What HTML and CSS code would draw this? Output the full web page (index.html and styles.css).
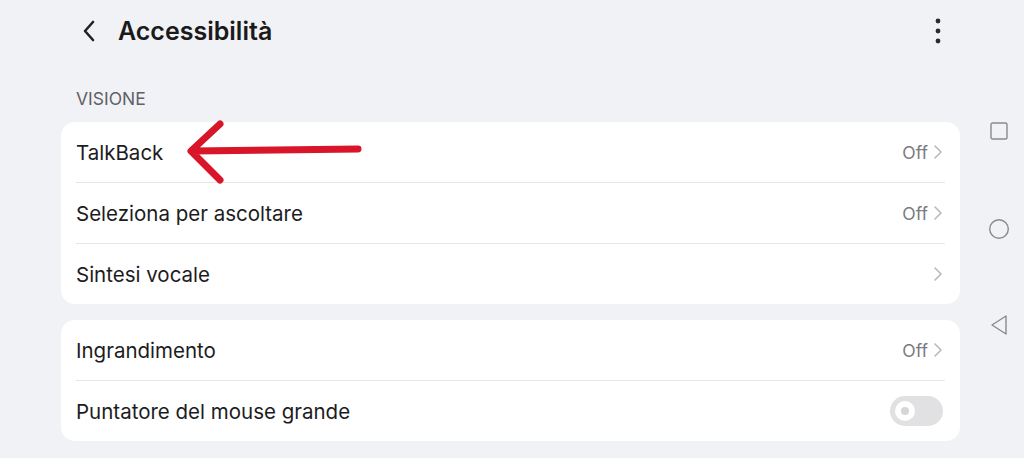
FILE: index.html
```html
<!DOCTYPE html>
<html lang="it">
<head>
  <meta charset="utf-8">
  <title>Accessibilità</title>
  <link rel="stylesheet" href="styles.css">
</head>
<body>
  <div class="screen">
    <main class="main">
      <header class="topbar">
        <svg class="back" width="16" height="22" viewBox="0 0 16 22"><path d="M12 2 L4 11 L12 20" fill="none" stroke="#222" stroke-width="2.6" stroke-linecap="round" stroke-linejoin="round"/></svg>
        <h1 class="title">Accessibilità</h1>
        <svg class="more" width="8" height="28" viewBox="0 0 8 28"><circle cx="4" cy="4" r="2.4" fill="#2b2b2b"/><circle cx="4" cy="14" r="2.4" fill="#2b2b2b"/><circle cx="4" cy="24" r="2.4" fill="#2b2b2b"/></svg>
      </header>

      <div class="section-label">VISIONE</div>

      <section class="card">
        <div class="row">
          <span class="label">TalkBack</span>
          <span class="value">Off</span>
          <svg class="chev" width="10" height="16" viewBox="0 0 10 16"><path d="M2 2 L8 8 L2 14" fill="none" stroke="#b9b9bd" stroke-width="1.6" stroke-linecap="round" stroke-linejoin="round"/></svg>
        </div>
        <div class="row">
          <span class="label">Seleziona per ascoltare</span>
          <span class="value">Off</span>
          <svg class="chev" width="10" height="16" viewBox="0 0 10 16"><path d="M2 2 L8 8 L2 14" fill="none" stroke="#b9b9bd" stroke-width="1.6" stroke-linecap="round" stroke-linejoin="round"/></svg>
        </div>
        <div class="row">
          <span class="label">Sintesi vocale</span>
          <svg class="chev" width="10" height="16" viewBox="0 0 10 16"><path d="M2 2 L8 8 L2 14" fill="none" stroke="#b9b9bd" stroke-width="1.6" stroke-linecap="round" stroke-linejoin="round"/></svg>
        </div>
      </section>

      <section class="card">
        <div class="row">
          <span class="label">Ingrandimento</span>
          <span class="value">Off</span>
          <svg class="chev" width="10" height="16" viewBox="0 0 10 16"><path d="M2 2 L8 8 L2 14" fill="none" stroke="#b9b9bd" stroke-width="1.6" stroke-linecap="round" stroke-linejoin="round"/></svg>
        </div>
        <div class="row">
          <span class="label">Puntatore del mouse grande</span>
          <span class="toggle"><span class="knob"></span></span>
        </div>
      </section>

      <svg class="arrow" width="200" height="80" viewBox="0 0 200 80">
        <path d="M178 29 L12 31 M40 4 L11 31 L40 60" fill="none" stroke="#d9152a" stroke-width="7" stroke-linecap="round" stroke-linejoin="round"/>
      </svg>
    </main>

    <nav class="navbar">
      <svg class="nav-recent" width="18" height="18" viewBox="0 0 18 18"><rect x="1" y="1" width="16" height="16" rx="1.5" fill="none" stroke="#8a8a8e" stroke-width="1.4"/></svg>
      <svg class="nav-home" width="22" height="22" viewBox="0 0 22 22"><circle cx="11" cy="11" r="9.3" fill="none" stroke="#8a8a8e" stroke-width="1.4"/></svg>
      <svg class="nav-back" width="18" height="22" viewBox="0 0 18 22"><path d="M16 2 L2 11 L16 20 Z" fill="none" stroke="#8a8a8e" stroke-width="1.4" stroke-linejoin="round"/></svg>
    </nav>
  </div>
</body>
</html>
```

FILE: styles.css
```css
* {
  box-sizing: border-box;
}

body {
  margin: 0;
  background-color: #f1f2f6;
  font-family: Inter, Roboto, sans-serif;
  color: #1c1c1e;
}

.screen {
  display: flex;
  height: 458px;
  overflow: hidden;
}

.main {
  position: relative;
  width: 960px;
  padding-left: 61px;
}

.topbar {
  display: flex;
  align-items: center;
  height: 62px;
  padding-left: 20px;
  padding-right: 18px;
}

.back {
  margin-right: 21px;
}

.title {
  flex: 1;
  margin: 0;
  font-size: 25px;
  font-weight: 600;
  color: #1a1a1a;
}

.section-label {
  padding: 26px 0 0 15px;
  height: 60px;
  font-size: 17.5px;
  color: #606065;
}

.card {
  background: #fff;
  border-radius: 14px;
  margin-bottom: 16px;
  padding: 0 15px;
}

.row {
  display: flex;
  align-items: center;
  height: 61px;
  border-top: 1px solid #e6e6e9;
}

.row:first-child {
  border-top: none;
  height: 60px;
}

.label {
  flex: 1;
  font-size: 20.5px;
  color: #1c1c1e;
}

.value {
  font-size: 17.5px;
  color: #7a7a7e;
  margin-right: 5px;
}

.chev {
  margin-right: 2px;
}

.toggle {
  position: relative;
  width: 53px;
  height: 30px;
  margin-right: 2px;
  border-radius: 15px;
  background: #e1e1e3;
}

.knob {
  position: absolute;
  left: 5px;
  top: 5px;
  width: 20px;
  height: 20px;
  border-radius: 50%;
  background: #fff;
}

.knob::after {
  content: "";
  position: absolute;
  left: 6px;
  top: 6px;
  width: 8px;
  height: 8px;
  border-radius: 50%;
  background: #d6d6d8;
}

.arrow {
  position: absolute;
  left: 180px;
  top: 120px;
}

.navbar {
  width: 64px;
  display: flex;
  flex-direction: column;
  align-items: center;
  padding-top: 122px;
  padding-left: 14px;
}

.nav-home {
  margin-top: 78px;
}

.nav-back {
  margin-top: 74px;
}
```
